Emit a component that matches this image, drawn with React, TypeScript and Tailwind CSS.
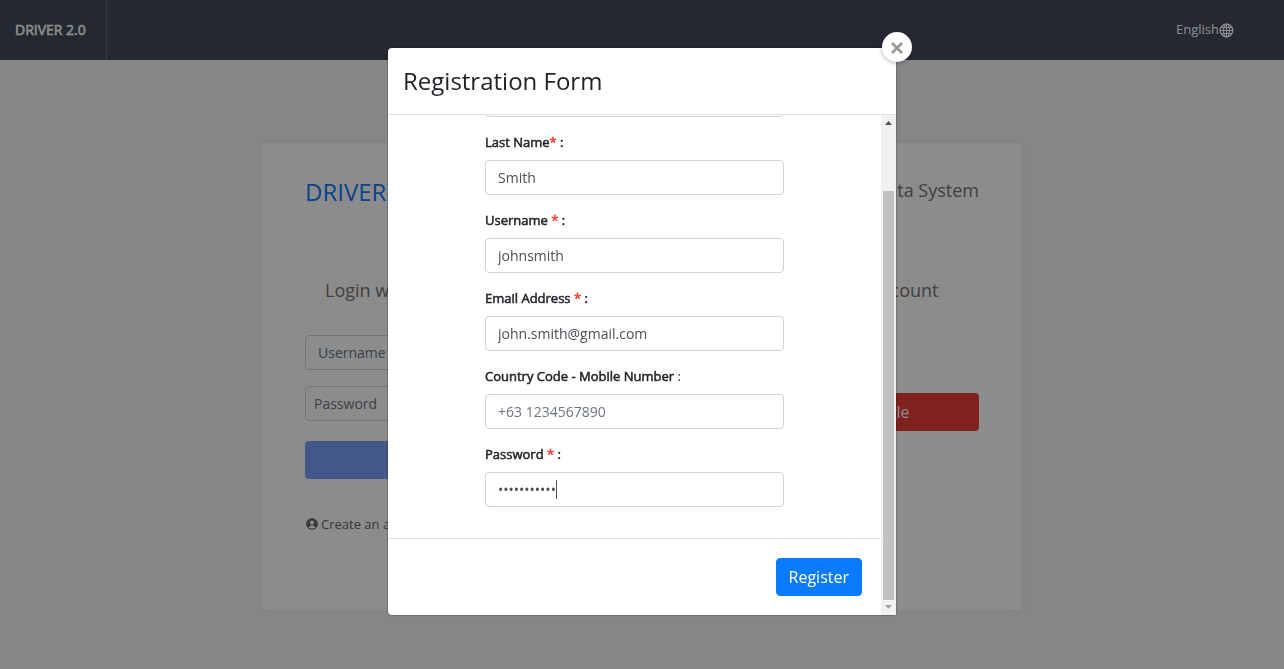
import { useLayoutEffect, useRef } from "react";
import type { ReactNode } from "react";
import { FaGoogle } from "react-icons/fa";
import { MdAccountCircle } from "react-icons/md";

const strong = "[-webkit-text-stroke:0.04em_currentColor]";

type FieldProps = {
  id: string;
  label: ReactNode;
  type?: string;
  value?: string;
  placeholder?: string;
  caret?: boolean;
};

function Field({ id, label, type = "text", value, placeholder, caret }: FieldProps) {
  return (
    <div className="mb-[15px]">
      <label htmlFor={id} className="mb-2 block text-[13px] leading-5 text-[#212529]">
        {label}
      </label>
      <div className="relative">
        <input
          id={id}
          type={type}
          defaultValue={value}
          placeholder={placeholder}
          className="block h-[35px] w-full rounded border border-[#ced4da] bg-white px-3 text-sm text-[#495057] outline-none placeholder:text-[#6c757d]"
        />
        {caret && <span className="absolute left-[71px] top-2 h-[19px] w-px bg-[#495057]" />}
      </div>
    </div>
  );
}

function Required() {
  return <span className="text-[#f3392b]">*</span>;
}

function Header() {
  return (
    <header className="flex h-[60px] items-center justify-between bg-[#434a5a]">
      <a
        href="#home"
        className={`flex h-full items-center border-r border-[#676e82] pl-[15px] pr-5 text-sm text-white ${strong}`}
      >
        DRIVER 2.0
      </a>
      <button type="button" className="mr-[50px] flex items-center text-[13px] text-white">
        English
        <svg viewBox="0 0 15 15" className="size-[15px]" fill="none" stroke="currentColor" aria-hidden="true">
          <circle cx="7.5" cy="7.5" r="6.3" strokeWidth="1.3" />
          <ellipse cx="7.5" cy="7.5" rx="3" ry="6.3" strokeWidth="1.2" />
          <path d="M7.5 1v13M1 7.5h13M2 4.5h11M2 10.5h11" />
        </svg>
      </button>
    </header>
  );
}

function LoginCard() {
  return (
    <section className="mx-auto mt-[83px] h-[467px] w-[760px] max-w-full rounded bg-white px-[43px] pt-8 shadow-[0_0_10px_rgba(0,0,0,0.04)]">
      <div className="flex items-start justify-between">
        <h1 className="text-2xl leading-[34px] text-[#0f7bff]">DRIVER</h1>
        <p className="text-lg leading-[30px] text-[#757575]">Road Incident Data System</p>
      </div>
      <div className="mt-[67px] grid grid-cols-2 gap-10">
        <form>
          <h2 className="pl-5 text-lg text-[#757575]">Login with your DRIVER account</h2>
          <input
            aria-label="Username"
            placeholder="Username"
            className="mt-[31px] block h-[35px] w-full rounded border border-[#ced4da] px-3 text-sm placeholder:text-[#6c757d]"
          />
          <input
            aria-label="Password"
            type="password"
            placeholder="Password"
            className="mt-4 block h-[35px] w-full rounded border border-[#ced4da] px-2 text-sm placeholder:text-[#6c757d]"
          />
          <button type="button" className="mt-5 block h-[38px] w-full rounded bg-[#7d9ffa] text-white">
            Login
          </button>
          <a href="#register" className="mt-[35px] flex items-center gap-0.5 text-[13px] leading-5 text-[#666]">
            <MdAccountCircle className="text-sm" />
            Create an account
          </a>
        </form>
        <div>
          <h2 className="text-center text-lg text-[#757575]">Login with a Google account</h2>
          <button
            type="button"
            className="mt-[89px] flex h-[38px] w-full items-center justify-center gap-3 rounded bg-[#e73c33] text-white"
          >
            <FaGoogle />
            Sign in using Google
          </button>
        </div>
      </div>
    </section>
  );
}

function Scrollbar() {
  return (
    <div className="flex w-[15px] shrink-0 flex-col items-center bg-[#f1f1f1]" aria-hidden="true">
      <svg viewBox="0 0 15 15" className="size-[15px] shrink-0 fill-[#505050]">
        <path d="M4 10l3.5-4 3.5 4z" />
      </svg>
      <div className="mt-[61px] w-[11px] grow bg-[#c1c1c1]" />
      <svg viewBox="0 0 15 15" className="size-[15px] shrink-0 fill-[#a3a3a3]">
        <path d="M4 5h7L7.5 9z" />
      </svg>
    </div>
  );
}

function RegistrationDialog() {
  const body = useRef<HTMLFormElement>(null);

  useLayoutEffect(() => {
    if (body.current) body.current.scrollTop = body.current.scrollHeight;
  }, []);

  return (
    <div className="fixed inset-0 flex items-start justify-center bg-black/45 pt-12">
      <div
        role="dialog"
        aria-labelledby="dialog-title"
        className="relative w-[508px] rounded bg-white shadow-[0_0_2px_rgba(0,0,0,0.6)]"
      >
        <button
          type="button"
          aria-label="Close"
          className="absolute -right-4 -top-4 flex size-[30px] items-center justify-center rounded-full bg-white pt-0.5 text-[#979797] shadow-[0_1px_4px_rgba(0,0,0,0.3)]"
        >
          <svg viewBox="0 0 12 12" className="size-3" stroke="currentColor" strokeWidth="2.6" aria-hidden="true">
            <path d="M1 1l10 10M11 1L1 11" />
          </svg>
        </button>
        <div className="flex h-[67px] items-center border-b border-[#dee2e6] px-[15px]">
          <h2 id="dialog-title" className="text-2xl text-[#212529]">
            Registration Form
          </h2>
        </div>
        <div className="flex h-[500px] overflow-hidden rounded-bl">
          <form ref={body} className="grow overflow-y-auto [scrollbar-width:none]">
            <div className="px-[97px] pb-4 pt-4">
              <Field
                id="first-name"
                value="John"
                label={<span className={strong}>First Name<Required /> :</span>}
              />
              <Field
                id="last-name"
                value="Smith"
                label={<span className={strong}>Last Name<Required /> :</span>}
              />
              <Field
                id="username"
                value="johnsmith"
                label={<span className={strong}>Username <Required /> :</span>}
              />
              <Field
                id="email"
                type="email"
                value="john.smith@gmail.com"
                label={<span className={strong}>Email Address <Required /> :</span>}
              />
              <Field
                id="mobile"
                type="tel"
                placeholder="+63 1234567890"
                label={<><span className={strong}>Country Code - Mobile Number</span> :</>}
              />
              <Field
                id="password"
                type="password"
                value="driver12345"
                caret
                label={<span className={strong}>Password <Required /> :</span>}
              />
            </div>
            <div className="flex justify-end border-t border-[#dee2e6] p-[19px]">
              <button
                type="button"
                className="h-[38px] rounded border border-[#0a7bff] bg-[#0a7bff] px-3 text-base text-white"
              >
                Register
              </button>
            </div>
          </form>
          <Scrollbar />
        </div>
      </div>
    </div>
  );
}

export default function App() {
  return (
    <div className="min-h-screen bg-[#f4f4f4] font-['Open_Sans',sans-serif]">
      <Header />
      <LoginCard />
      <RegistrationDialog />
    </div>
  );
}
